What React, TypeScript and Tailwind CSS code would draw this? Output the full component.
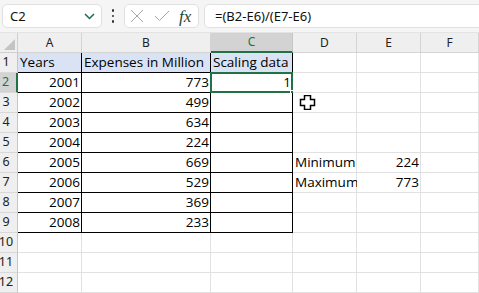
import React from "react";

const cellFont = { fontFamily: '"Open Sans", "Noto Sans", sans-serif' };
const uiFont = { fontFamily: '"Noto Sans", "Open Sans", sans-serif' };

type Cell = { v?: string; align?: "l" | "r"; table?: boolean; fill?: boolean; sel?: boolean };

const colW = ["w-[64px]", "w-[129px]", "w-[82px]", "w-[64px]", "w-[64px]", "w-[58px]"];
const cols = ["A", "B", "C", "D", "E", "F"];

const data: Record<number, Cell[]> = {};
const yrs = ["2001", "2002", "2003", "2004", "2005", "2006", "2007", "2008"];
const exp = ["773", "499", "634", "224", "669", "529", "369", "233"];
for (let r = 1; r <= 12; r++) {
  const row: Cell[] = [];
  for (let c = 0; c < 6; c++) row.push({ table: r <= 9 && c <= 2 });
  if (r === 1) {
    row[0] = { v: "Years", align: "l", table: true, fill: true };
    row[1] = { v: "Expenses in Million", align: "l", table: true, fill: true };
    row[2] = { v: "Scaling data", align: "l", table: true, fill: true };
  } else if (r <= 9) {
    row[0] = { v: yrs[r - 2], align: "r", table: true };
    row[1] = { v: exp[r - 2], align: "r", table: true };
    if (r === 2) row[2] = { v: "1", align: "r", table: true, sel: true };
  }
  if (r === 6) {
    row[3] = { v: "Minimum", align: "l" };
    row[4] = { v: "224", align: "r" };
  }
  if (r === 7) {
    row[3] = { v: "Maximum", align: "l" };
    row[4] = { v: "773", align: "r" };
  }
  data[r] = row;
}

function Toolbar() {
  return (
    <div className="h-[33px] bg-[#f5f5f5] border-b border-[#e3e3e3] flex items-center pl-[2px] gap-0">
      <div className="w-[100px] h-[24px] bg-white rounded-[5px] border border-[#e0e0e0] flex items-center pl-[7px] pr-[4px]">
        <span className="text-[13px] text-[#111] leading-none" style={uiFont}>C2</span>
        <svg className="ml-auto mr-[2px]" width="11" height="7" viewBox="0 0 11 7">
          <path d="M1 1 L5.5 5.5 L10 1" fill="none" stroke="#1f6b48" strokeWidth="1.5" />
        </svg>
      </div>
      <div className="w-[22px] flex flex-col items-center gap-[3px]">
        <span className="w-[2.5px] h-[2.5px] rounded-full bg-[#333]" />
        <span className="w-[2.5px] h-[2.5px] rounded-full bg-[#333]" />
        <span className="w-[2.5px] h-[2.5px] rounded-full bg-[#333]" />
      </div>
      <div className="w-[75px] h-[24px] bg-white rounded-[5px] border border-[#e0e0e0] flex items-center pl-[5px]">
        <svg width="14" height="14" viewBox="0 0 14 14">
          <path d="M1 1 L13 13 M13 1 L1 13" stroke="#a6a6a6" strokeWidth="1" fill="none" />
        </svg>
        <svg className="ml-[10px]" width="16" height="12" viewBox="0 0 16 12">
          <path d="M1 6 L5.5 10.5 L15 1" stroke="#a6a6a6" strokeWidth="1" fill="none" />
        </svg>
        <span
          className="ml-[9px] text-[17px] italic leading-none text-[#174a36]"
          style={{ fontFamily: '"Liberation Serif", "DejaVu Serif", serif' }}
        >
          fx
        </span>
      </div>
      <div className="ml-[5px] flex-1 h-[24px] bg-white rounded-l-[5px] border border-r-0 border-[#e0e0e0] flex items-center pl-[10px]">
        <span className="text-[13px] text-[#111] leading-none" style={uiFont}>=(B2-E6)/(E7-E6)</span>
      </div>
    </div>
  );
}

function HeaderRow() {
  return (
    <div className="flex h-[20px]">
      <div className="w-[18px] h-[20px] bg-[#efefef] border-r border-b border-[#cfcfcf] relative">
        <svg className="absolute right-[2px] bottom-[2px]" width="11" height="11" viewBox="0 0 11 11">
          <path d="M11 0 L11 11 L0 11 Z" fill="#c4c4c4" />
        </svg>
      </div>
      {cols.map((c, i) =>
        c === "C" ? (
          <div
            key={c}
            className={`${colW[i]} h-[20px] bg-[#d3d3d3] border-r border-[#c6c6c6] border-b-2 border-b-[#217346] flex items-center justify-center text-[12px] text-[#217346]`}
            style={uiFont}
          >
            {c}
          </div>
        ) : (
          <div
            key={c}
            className={`${colW[i]} h-[20px] bg-[#efefef] border-r border-b border-[#d4d4d4] flex items-center justify-center text-[12px] text-[#222]`}
            style={uiFont}
          >
            {c}
          </div>
        )
      )}
    </div>
  );
}

function Row({ r }: { r: number }) {
  const cells = data[r];
  const selRow = r === 2;
  return (
    <div className="flex h-[20px]">
      <div
        className={`w-[18px] h-[20px] border-b border-[#d8d8d8] flex items-center justify-center pr-[5px] text-[12.5px] ${
          selRow ? "bg-[#d3d3d3] text-[#217346] border-r-2 border-r-[#217346]" : "bg-[#efefef] text-[#222] border-r border-r-[#c6c6c6]"
        }`}
        style={uiFont}
      >
        {r}
      </div>
      {cells.map((cell, i) => {
        const rightBlack = cell.table || (i === 2 && r <= 9);
        const bottomBlack = cell.table;
        return (
          <div
            key={i}
            className={`${colW[i]} h-[20px] relative border-r border-b flex items-end pb-[1px] pl-[2px] pr-[1px] text-[13.5px] leading-[17px] text-black whitespace-nowrap ${
              rightBlack ? "border-r-black" : "border-r-[#e1e1e1]"
            } ${bottomBlack ? "border-b-black" : "border-b-[#e1e1e1]"} ${cell.fill ? "bg-[#dae3f3]" : "bg-white"} ${
              cell.align === "r" ? "justify-end" : "justify-start"
            }`}
            style={cellFont}
          >
            {cell.v}
            {cell.sel && (
              <>
                <div className="absolute left-[-1px] top-[-1px] right-[-1px] bottom-[-1px] border-2 border-[#217346] pointer-events-none" />
                <div className="absolute right-[-4px] bottom-[-4px] w-[6px] h-[6px] bg-[#217346] border border-white" />
              </>
            )}
          </div>
        );
      })}
    </div>
  );
}

export default function App() {
  return (
    <div className="w-[479px] h-[293px] overflow-hidden bg-white relative select-none">
      <Toolbar />
      <HeaderRow />
      {Array.from({ length: 12 }, (_, k) => (
        <Row key={k} r={k + 1} />
      ))}
      <svg className="absolute left-[299px] top-[95px]" width="17" height="15" viewBox="0 0 17 15">
        <path
          d="M5.5 0.5 H11.5 V4.5 H15.5 V10.5 H11.5 V14.5 H5.5 V10.5 H1.5 V4.5 H5.5 Z"
          fill="white"
          stroke="black"
          strokeWidth="1.5"
        />
      </svg>
    </div>
  );
}
